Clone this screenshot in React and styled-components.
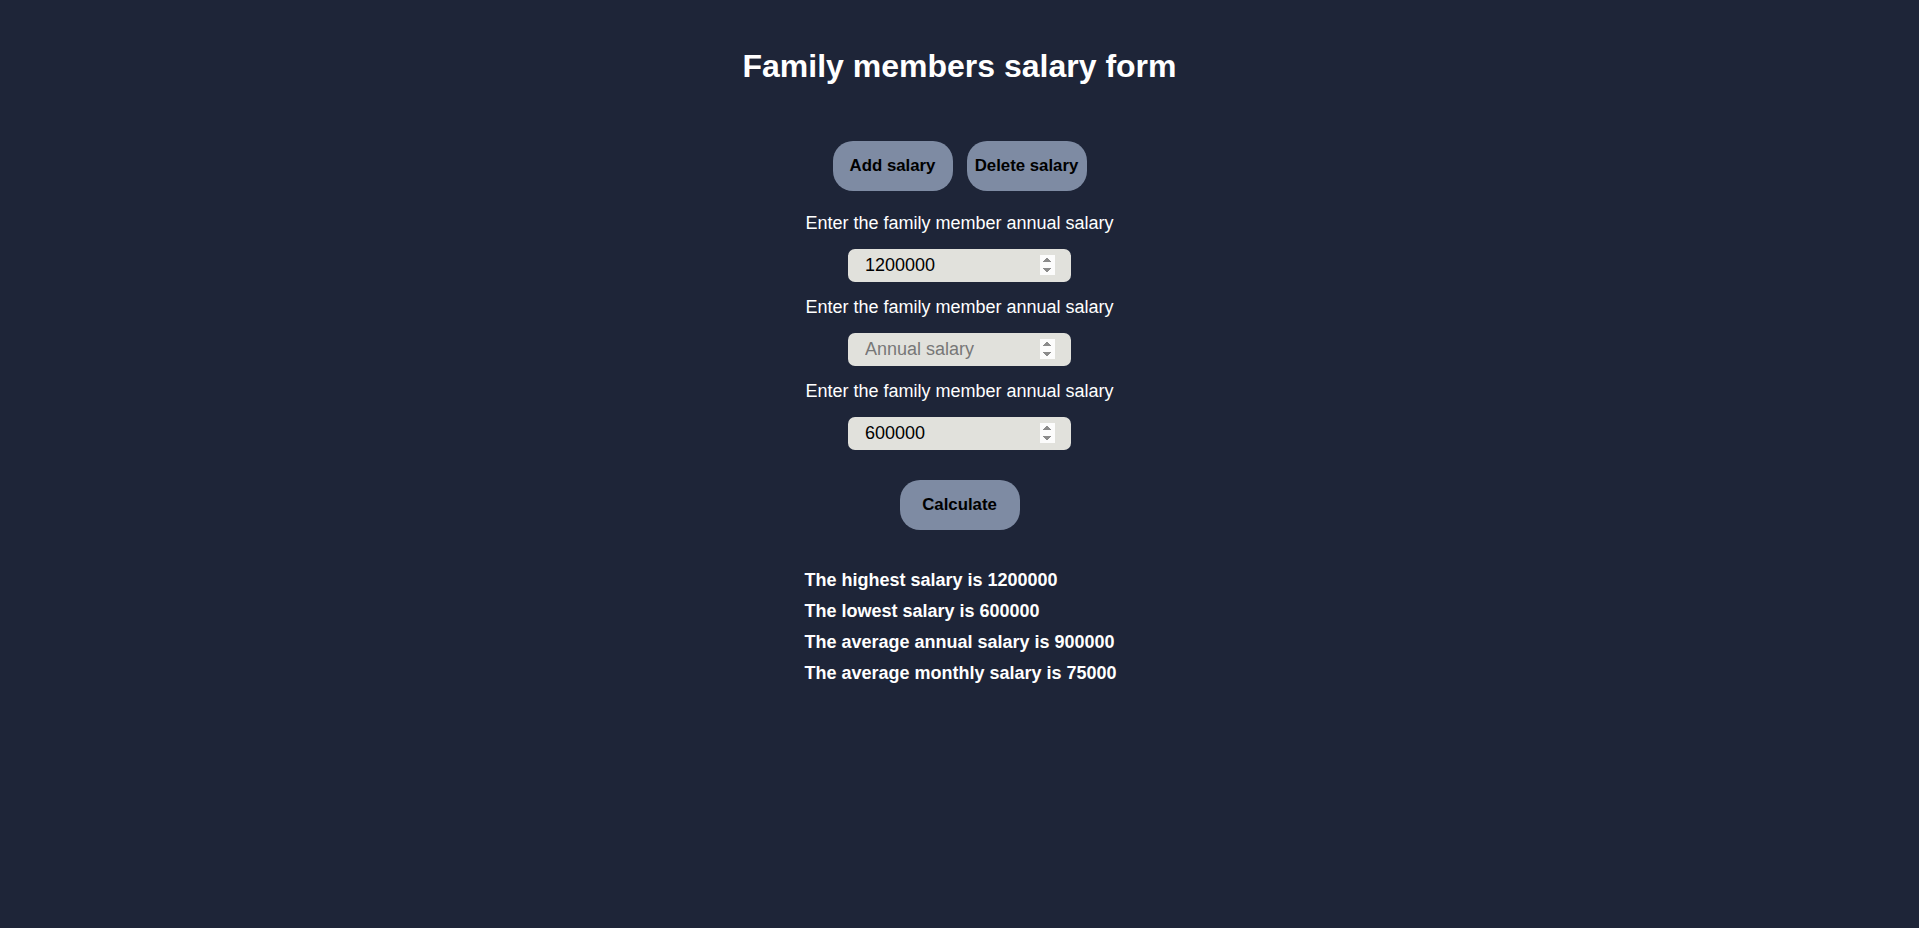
import React, { useState } from 'react';
import styled, { createGlobalStyle } from 'styled-components';

const GlobalStyle = createGlobalStyle`
  html, body {
    margin: 0;
    padding: 0;
    background: #1e2538;
    min-height: 100%;
  }
  body {
    font-family: "Liberation Sans", Arial, sans-serif;
    color: #ffffff;
  }
`;

const Page = styled.div`
  min-height: 928px;
  box-sizing: border-box;
  padding-top: 48px;
  display: flex;
  flex-direction: column;
  align-items: center;
  background: #1e2538;
`;

const Title = styled.h1`
  margin: 0;
  font-size: 32px;
  font-weight: 700;
  line-height: 37px;
`;

const ButtonRow = styled.div`
  display: flex;
  gap: 14px;
  margin-top: 56px;
  margin-bottom: 22px;
`;

const Button = styled.button`
  width: 120px;
  height: 50px;
  border: none;
  border-radius: 20px;
  background: #7e8ba3;
  color: #000000;
  font-family: "Liberation Sans", Arial, sans-serif;
  font-weight: 700;
  font-size: 16.8px;
  padding: 0;
  cursor: pointer;
`;

const Field = styled.div`
  display: flex;
  flex-direction: column;
  align-items: center;
  margin-bottom: 15px;
`;

const Label = styled.label`
  font-size: 18px;
  line-height: 21px;
  margin-bottom: 15px;
`;

const Input = styled.input`
  width: 223px;
  height: 33px;
  box-sizing: border-box;
  border: none;
  border-radius: 7px;
  background: #e1e1dc;
  padding: 0 16px 0 17px;
  font-family: "Liberation Sans", Arial, sans-serif;
  font-size: 18px;
  color: #000000;
  outline: none;
  &::placeholder {
    color: #777777;
  }
  &::-webkit-inner-spin-button {
    opacity: 1;
    height: 20px;
  }
`;

const CalcRow = styled.div`
  margin-top: 15px;
  margin-bottom: 40px;
`;

const Results = styled.div`
  display: flex;
  flex-direction: column;
  gap: 10px;
  padding-left: 2px;
`;

const Result = styled.p`
  margin: 0;
  font-size: 18px;
  font-weight: 700;
  line-height: 21px;
`;

export default function App() {
  const [salaries, setSalaries] = useState(['1200000', '', '600000']);
  const [result, setResult] = useState({ high: 1200000, low: 600000, avg: 900000, month: 75000 });

  const update = (i, v) => {
    const next = [...salaries];
    next[i] = v;
    setSalaries(next);
  };

  const calculate = () => {
    const nums = salaries.filter((s) => s !== '').map(Number);
    if (!nums.length) return;
    const avg = nums.reduce((a, b) => a + b, 0) / nums.length;
    setResult({ high: Math.max(...nums), low: Math.min(...nums), avg, month: avg / 12 });
  };

  return (
    <Page>
      <GlobalStyle />
      <Title>Family members salary form</Title>
      <ButtonRow>
        <Button onClick={() => setSalaries([...salaries, ''])}>Add salary</Button>
        <Button onClick={() => setSalaries(salaries.slice(0, -1))}>Delete salary</Button>
      </ButtonRow>
      {salaries.map((s, i) => (
        <Field key={i}>
          <Label>Enter the family member annual salary</Label>
          <Input
            type="number"
            placeholder="Annual salary"
            value={s}
            onChange={(e) => update(i, e.target.value)}
          />
        </Field>
      ))}
      <CalcRow>
        <Button onClick={calculate}>Calculate</Button>
      </CalcRow>
      <Results>
        <Result>The highest salary is {result.high}</Result>
        <Result>The lowest salary is {result.low}</Result>
        <Result>The average annual salary is {result.avg}</Result>
        <Result>The average monthly salary is {result.month}</Result>
      </Results>
    </Page>
  );
}
